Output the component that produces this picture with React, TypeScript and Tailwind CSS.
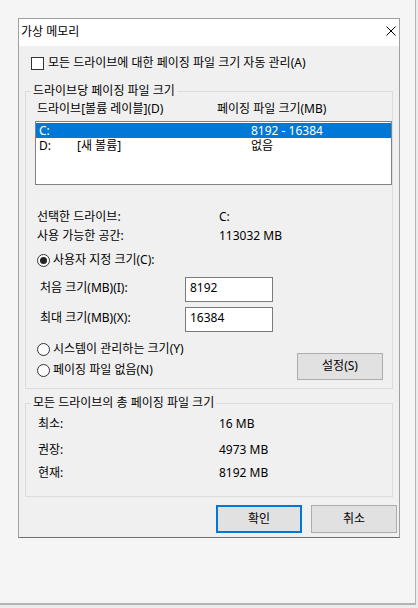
export default function App() {
  return (
    <div className="w-[418px] h-[608px] bg-[#ececec] font-['Noto_Sans','Noto_Sans_CJK_KR',sans-serif] text-[12px] leading-[16px] text-black overflow-hidden">
      <div className="w-[416px] h-[605px] bg-[#f5f5f5] border-b-2 border-r border-[#b4b4b4] pt-[18px] pl-[18px]">
        <div className="w-[382px] flex flex-col border border-[#a0a0a0] border-b-[#6e6e6e]">
          {/* Title bar */}
          <div className="h-[27px] bg-white flex items-center justify-between pl-[2px] pr-[3px]">
            <span className="pb-[2px]">가상 메모리</span>
            <svg width="10" height="10" viewBox="0 0 10 10" className="mb-[3px]">
              <path d="M0.5 0.5 L9.5 9.5 M9.5 0.5 L0.5 9.5" stroke="#000" strokeWidth="1" fill="none" />
            </svg>
          </div>
          {/* Body */}
          <div className="bg-[#f0f0f0] flex flex-col pb-[4px]">
            <div className="mt-[8px] h-[18px] flex items-center pl-[12px] gap-[4px]">
              <span className="w-[13px] h-[13px] border border-[#333] bg-white" />
              <span>모든 드라이브에 대한 페이징 파일 크기 자동 관리(A)</span>
            </div>

            <fieldset className="mt-[11px] mx-[6px] border border-[#dcdcdc] pb-[8px]">
              <legend className="ml-[5px] px-[2px] leading-[16px]">드라이브당 페이징 파일 크기</legend>
              <div className="mt-[2px] h-[16px] flex pl-[11px]">
                <span className="w-[180px]">드라이브[볼륨 레이블](D)</span>
                <span>페이징 파일 크기(MB)</span>
              </div>
              <div className="mt-[4px] ml-[9px] w-[357px] h-[64px] border border-[#828282] bg-white pt-[1px]">
                <div className="h-[15px] leading-[15px] bg-[#0078d7] text-white flex items-center pl-[3px]">
                  <span className="w-[212px]">C:</span>
                  <span>8192 - 16384</span>
                </div>
                <div className="h-[16px] leading-[16px] flex items-center pl-[3px]">
                  <span className="w-[38px]">D:</span>
                  <span className="w-[174px]">[새 볼륨]</span>
                  <span>없음</span>
                </div>
              </div>

              <div className="mt-[24px] h-[16px] flex pl-[11px]">
                <span className="w-[182px]">선택한 드라이브:</span>
                <span>C:</span>
              </div>
              <div className="mt-[3px] h-[16px] flex pl-[11px]">
                <span className="w-[182px]">사용 가능한 공간:</span>
                <span>113032 MB</span>
              </div>

              <div className="mt-[8px] h-[16px] flex items-center pl-[11px] gap-[3px]">
                <span className="w-[13px] h-[13px] rounded-full border border-[#333] bg-white flex items-center justify-center">
                  <span className="w-[7px] h-[7px] rounded-full bg-[#222]" />
                </span>
                <span>사용자 지정 크기(C):</span>
              </div>

              <div className="mt-[9px] h-[25px] flex items-center pl-[14px]">
                <span className="w-[145px] pb-[4px]">처음 크기(MB)(I):</span>
                <div className="w-[88px] h-[25px] border border-[#7a7a7a] bg-white flex items-center pl-[4px] pb-[4px]">8192</div>
              </div>
              <div className="mt-[5px] h-[25px] flex items-center pl-[14px]">
                <span className="w-[145px] pb-[4px]">최대 크기(MB)(X):</span>
                <div className="w-[88px] h-[25px] border border-[#7a7a7a] bg-white flex items-center pl-[4px] pb-[4px]">16384</div>
              </div>

              <div className="flex justify-between items-start pr-[9px]">
                <div className="flex flex-col pl-[11px]">
                  <div className="mt-[9px] h-[16px] flex items-center gap-[3px]">
                    <span className="w-[13px] h-[13px] rounded-full border border-[#333] bg-white" />
                    <span>시스템이 관리하는 크기(Y)</span>
                  </div>
                  <div className="mt-[5px] h-[16px] flex items-center gap-[3px]">
                    <span className="w-[13px] h-[13px] rounded-full border border-[#333] bg-white" />
                    <span>페이징 파일 없음(N)</span>
                  </div>
                </div>
                <div className="mt-[21px] w-[86px] h-[27px] border border-[#adadad] bg-[#e1e1e1] flex items-center justify-center pb-[1px]">
                  설정(S)
                </div>
              </div>
            </fieldset>

            <fieldset className="mt-[6px] mx-[6px] border border-[#dcdcdc] pb-[15px]">
              <legend className="ml-[5px] px-[2px] leading-[16px]">모든 드라이브의 총 페이징 파일 크기</legend>
              <div className="mt-[5px] h-[16px] flex pl-[12px]">
                <span className="w-[181px]">최소:</span>
                <span>16 MB</span>
              </div>
              <div className="mt-[10px] h-[16px] flex pl-[12px]">
                <span className="w-[181px]">권장:</span>
                <span>4973 MB</span>
              </div>
              <div className="mt-[7px] h-[16px] flex pl-[12px]">
                <span className="w-[181px]">현재:</span>
                <span>8192 MB</span>
              </div>
            </fieldset>

            <div className="mt-[8px] flex justify-end gap-[9px] pr-[2px]">
              <div className="w-[86px] h-[28px] border-2 border-[#0078d7] bg-[#e1e1e1] flex items-center justify-center pb-[1px]">확인</div>
              <div className="w-[86px] h-[28px] border border-[#adadad] bg-[#e1e1e1] flex items-center justify-center pb-[1px]">취소</div>
            </div>
          </div>
        </div>
      </div>
    </div>
  );
}
